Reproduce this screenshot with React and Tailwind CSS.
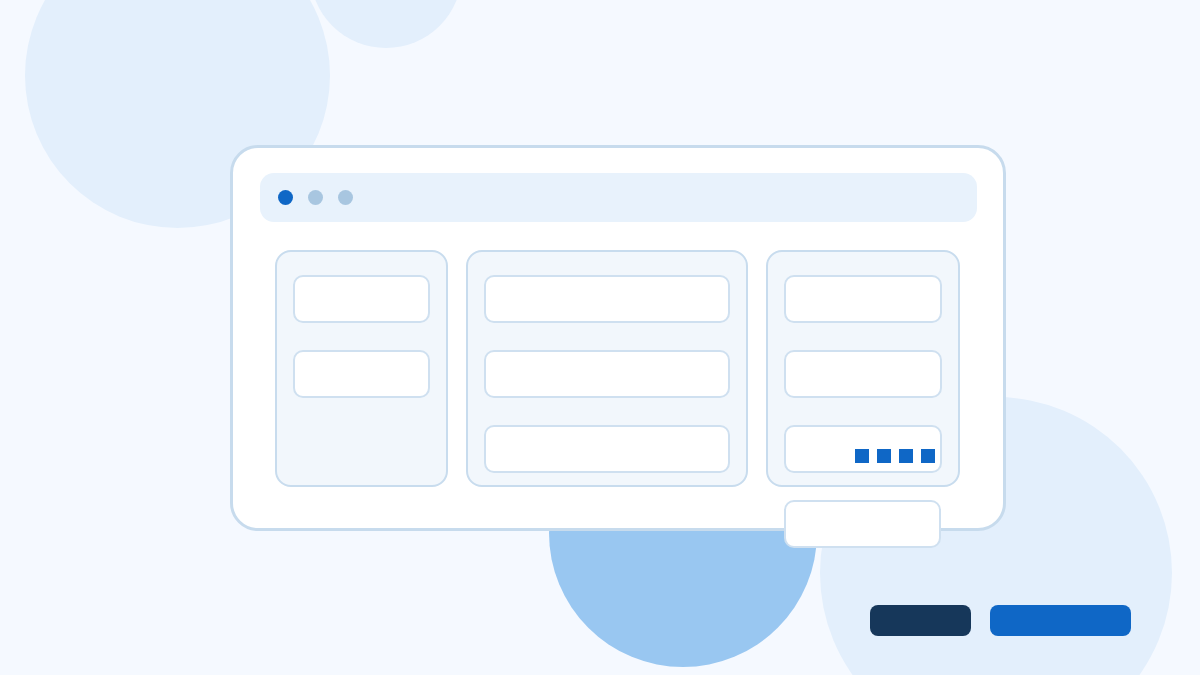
import React from "react";

function Card({ children, className = "" }) {
    return (
        <div className={`h-[48px] rounded-[10px] border-2 border-[#cfe0f0] bg-white ${className}`}>
            {children}
        </div>
    );
}

function Column({ width, count, last }) {
    return (
        <div
            className={`flex h-[237px] flex-col gap-[27px] rounded-[16px] border-2 border-[#c8dcee] bg-[#f2f7fc] px-[16px] pt-[23px] ${width}`}
        >
            {Array.from({ length: count }).map((_, i) => (
                <Card
                    key={i}
                    className={last && i === count - 1 ? "flex items-end justify-end gap-[8px] pb-[8px] pr-[5px]" : ""}
                >
                    {last && i === count - 1 && (
                        <>
                            <span className="h-[14px] w-[14px] bg-[#0f67c6]" />
                            <span className="h-[14px] w-[14px] bg-[#0f67c6]" />
                            <span className="h-[14px] w-[14px] bg-[#0f67c6]" />
                            <span className="h-[14px] w-[14px] bg-[#0f67c6]" />
                        </>
                    )}
                </Card>
            ))}
        </div>
    );
}

export default function App() {
    return (
        <div className="relative h-[675px] w-[1200px] overflow-hidden bg-[#f5f9ff] font-['Liberation_Sans',sans-serif]">
            {/* decorative circles */}
            <div className="absolute left-[25px] top-[-77px] h-[305px] w-[305px] rounded-full bg-[#e3effc]" />
            <div className="absolute left-[310px] top-[-104px] h-[152px] w-[152px] rounded-full bg-[#e3effc]" />
            <div className="absolute left-[820px] top-[397px] h-[352px] w-[352px] rounded-full bg-[#e3effc]" />
            <div className="absolute left-[549px] top-[399px] h-[268px] w-[268px] rounded-full bg-[#99c7f1]" />

            <div className="relative z-10 pl-[230px] pt-[145px]">
                {/* window */}
                <div className="relative h-[386px] w-[776px] rounded-[28px] border-[3px] border-[#c7dbed] bg-white pl-[27px] pt-[25px]">
                    <div className="flex h-[49px] w-[717px] items-center gap-[15px] rounded-[14px] bg-[#e8f2fc] pl-[18px]">
                        <span className="h-[15px] w-[15px] rounded-full bg-[#0f67c6]" />
                        <span className="h-[15px] w-[15px] rounded-full bg-[#a8c6e0]" />
                        <span className="h-[15px] w-[15px] rounded-full bg-[#a8c6e0]" />
                    </div>

                    <div className="mt-[28px] flex gap-[18px] pl-[15px]">
                        <Column width="w-[173px]" count={2} />
                        <Column width="w-[282px]" count={3} />
                        <Column width="w-[194px]" count={3} last />
                    </div>

                    {/* floating card over the window edge */}
                    <div className="absolute left-[551px] top-[352px] h-[48px] w-[157px] rounded-[10px] border-2 border-[#cfe0f0] bg-white" />
                </div>

                {/* buttons */}
                <div className="mt-[74px] flex w-[901px] justify-end gap-[19px]">
                    <div className="h-[31px] w-[101px] rounded-[8px] bg-[#16375a]" />
                    <div className="h-[31px] w-[141px] rounded-[8px] bg-[#0f67c6]" />
                </div>
            </div>
        </div>
    );
}
